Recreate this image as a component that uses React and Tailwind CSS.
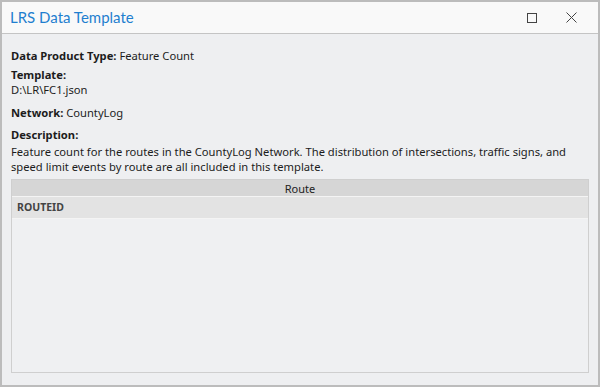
import React from "react";

const font = { fontFamily: '"Noto Sans", "Open Sans", sans-serif' };

export default function App() {
  return (
    <div
      className="w-[600px] h-[387px] border-2 border-[#bcbcbc] bg-[#eeeff1] flex flex-col text-[#1c1c1c] overflow-hidden"
      style={font}
    >
      {/* Title bar */}
      <div className="h-[32px] shrink-0 bg-[#f9f9f9] border-b border-[#c4c4c4] flex items-center pl-[8px]">
        <span className="text-[15px] text-[#1f7fcf] leading-none" style={{ fontFamily: "Lato, sans-serif" }}>
          LRS Data Template
        </span>
        <div className="ml-auto flex items-center">
          <svg width="10" height="10" viewBox="0 0 10 10" className="mr-[29px]">
            <rect x="0.5" y="0.5" width="9" height="9" fill="none" stroke="#444" strokeWidth="1" />
          </svg>
          <svg width="11" height="11" viewBox="0 0 11 11" className="mr-[21px]">
            <path d="M0.5 0.5 L10.5 10.5 M10.5 0.5 L0.5 10.5" stroke="#444" strokeWidth="1" />
          </svg>
        </div>
      </div>

      {/* Body */}
      <div className="flex-1 flex flex-col px-[9px] pt-[14px] pb-[12px] text-[11.2px] leading-[15px]">
        <p>
          <span className="font-bold">Data Product Type:</span> Feature Count
        </p>
        <p className="mt-[4px] font-bold">Template:</p>
        <p>D:\LR\FC1.json</p>
        <p className="mt-[8px]">
          <span className="font-bold">Network:</span> CountyLog
        </p>
        <p className="mt-[7px] font-bold">Description:</p>
        <p className="mt-[2px]">
          Feature count for the routes in the CountyLog Network. The distribution of intersections, traffic signs, and
          speed limit events by route are all included in this template.
        </p>

        {/* Table */}
        <div className="mt-[5px] flex-1 flex flex-col border border-[#cfcfcf] bg-[#eff0f2]">
          <div className="h-[16px] bg-[#d6d6d6] flex items-center justify-center text-[11px] text-[#222]">Route</div>
          <div className="h-[23px] bg-[#e3e3e3] border-t border-b border-[#f4f4f4] flex items-center px-[5px] text-[10.5px] font-bold text-[#444]">
            ROUTEID
          </div>
          <div className="flex-1" />
        </div>
      </div>
    </div>
  );
}
